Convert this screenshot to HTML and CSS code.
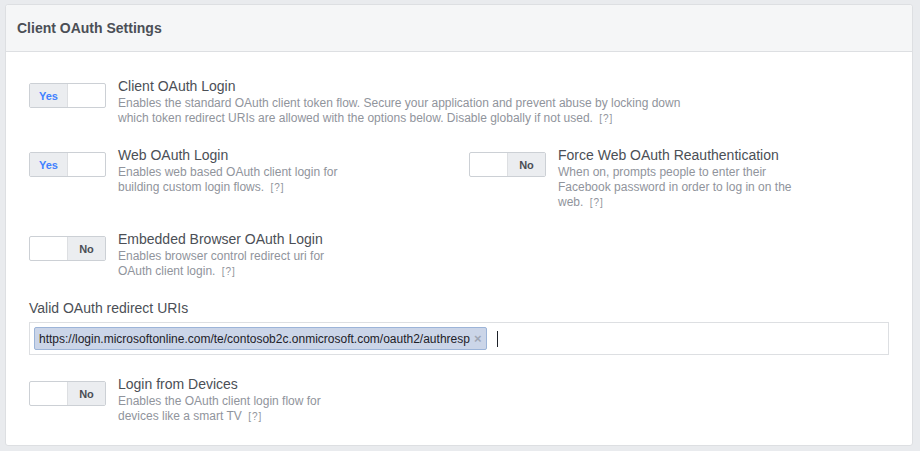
FILE: index.html
```html
<!DOCTYPE html>
<html>
<head>
<meta charset="utf-8">
<link rel="stylesheet" href="styles.css">
</head>
<body>
<div class="card">
  <div class="card-header">Client OAuth Settings</div>
  <div class="card-body">
    <div class="row">
      <div class="setting wide">
        <div class="toggle on"><span class="seg seg-label">Yes</span><span class="seg"></span></div>
        <div class="info">
          <div class="title">Client OAuth Login</div>
          <div class="desc">Enables the standard OAuth client token flow. Secure your application and prevent abuse by locking down which token redirect URIs are allowed with the options below. Disable globally if not used. <span class="help">[?]</span></div>
        </div>
      </div>
    </div>
    <div class="row two">
      <div class="setting">
        <div class="toggle on"><span class="seg seg-label">Yes</span><span class="seg"></span></div>
        <div class="info">
          <div class="title">Web OAuth Login</div>
          <div class="desc">Enables web based OAuth client login for building custom login flows. <span class="help">[?]</span></div>
        </div>
      </div>
      <div class="setting">
        <div class="toggle off"><span class="seg"></span><span class="seg seg-label">No</span></div>
        <div class="info">
          <div class="title">Force Web OAuth Reauthentication</div>
          <div class="desc">When on, prompts people to enter their Facebook password in order to log in on the web. <span class="help">[?]</span></div>
        </div>
      </div>
    </div>
    <div class="row">
      <div class="setting">
        <div class="toggle off"><span class="seg"></span><span class="seg seg-label">No</span></div>
        <div class="info">
          <div class="title">Embedded Browser OAuth Login</div>
          <div class="desc">Enables browser control redirect uri for OAuth client login. <span class="help">[?]</span></div>
        </div>
      </div>
    </div>
    <div class="field">
      <div class="field-label">Valid OAuth redirect URIs</div>
      <div class="token-input">
        <span class="token">https://login.microsoftonline.com/te/contosob2c.onmicrosoft.com/oauth2/authresp<span class="token-x">×</span></span>
        <span class="caret"></span>
      </div>
    </div>
    <div class="row last">
      <div class="setting">
        <div class="toggle off"><span class="seg"></span><span class="seg seg-label">No</span></div>
        <div class="info">
          <div class="title">Login from Devices</div>
          <div class="desc">Enables the OAuth client login flow for devices like a smart TV <span class="help">[?]</span></div>
        </div>
      </div>
    </div>
  </div>
</div>
</body>
</html>
```
FILE: styles.css
```css
html, body {
  margin: 0;
  padding: 0;
}
body {
  background: #e9ebee;
  font-family: "Liberation Sans", Arial, Helvetica, sans-serif;
  padding: 4px 7px 0 5px;
}
.card {
  background: #fff;
  border: 1px solid #dddfe2;
  border-radius: 3px;
  height: 442px;
  box-sizing: border-box;
}
.card-header {
  background: #f5f6f7;
  border-bottom: 1px solid #dddfe2;
  height: 47px;
  box-sizing: border-box;
  padding-left: 11px;
  display: flex;
  align-items: center;
  font-size: 14px;
  font-weight: bold;
  color: #4b4f56;
  border-radius: 3px 3px 0 0;
}
.card-body {
  padding: 25px 24px 0 23px;
}
.row {
  display: flex;
  margin-bottom: 20px;
}
.row.two .setting:first-child {
  width: 440px;
  flex: none;
}
.setting {
  display: flex;
  gap: 12px;
}
.toggle {
  margin-top: 6px;
  width: 77px;
  height: 25px;
  box-sizing: border-box;
  border: 1px solid #ccd0d5;
  border-radius: 2px;
  display: flex;
  flex: none;
  overflow: hidden;
}
.seg {
  flex: 1;
  display: flex;
  align-items: center;
  justify-content: center;
  font-size: 11px;
  font-weight: bold;
}
.seg-label {
  background: #ebedf0;
}
.toggle.on .seg-label {
  color: #4080ff;
  border-right: 1px solid #dddfe2;
}
.toggle.off .seg-label {
  color: #4b4f56;
  border-left: 1px solid #dddfe2;
}
.title {
  font-size: 14px;
  line-height: 18px;
  color: #4b4f56;
}
.desc {
  font-size: 12px;
  line-height: 15px;
  color: #90949c;
  width: 237px;
  margin-top: 1px;
}
.wide .desc {
  width: 580px;
}
.help {
  font-size: 10px;
  line-height: 10px;
  letter-spacing: 1px;
  margin-left: 3px;
}
.field {
  margin-bottom: 20px;
}
.field-label {
  font-size: 14px;
  line-height: 18px;
  color: #4b4f56;
  margin-bottom: 5px;
}
.token-input {
  height: 33px;
  box-sizing: border-box;
  border: 1px solid #dddfe2;
  width: 860px;
  display: flex;
  align-items: center;
  padding-left: 4px;
}
.token {
  background: #cbd5e8;
  border: 1px solid #9cb4d8;
  border-radius: 2px;
  height: 23px;
  box-sizing: border-box;
  display: flex;
  align-items: center;
  padding: 0 4px 0 4px;
  font-size: 12px;
  color: #1d2129;
}
.token-x {
  color: #9ea6b5;
  font-size: 13px;
  font-weight: bold;
  margin-left: 4px;
}
.caret {
  width: 1px;
  height: 16px;
  background: #1d2129;
  margin-left: 10px;
}
.row.last {
  margin-bottom: 0;
}
```
